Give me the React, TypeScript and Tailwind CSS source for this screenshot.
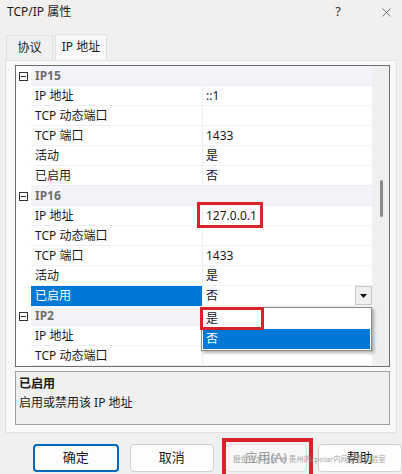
import React from 'react';
import { X } from 'lucide-react';

type Row = { name: string; value: string; selected?: boolean };
type Group = { name: string; rows: Row[] };

const groups: Group[] = [
  {
    name: 'IP15',
    rows: [
      { name: 'IP 地址', value: '::1' },
      { name: 'TCP 动态端口', value: '' },
      { name: 'TCP 端口', value: '1433' },
      { name: '活动', value: '是' },
      { name: '已启用', value: '否' },
    ],
  },
  {
    name: 'IP16',
    rows: [
      { name: 'IP 地址', value: '127.0.0.1' },
      { name: 'TCP 动态端口', value: '' },
      { name: 'TCP 端口', value: '1433' },
      { name: '活动', value: '是' },
      { name: '已启用', value: '否', selected: true },
    ],
  },
  {
    name: 'IP2',
    rows: [
      { name: 'IP 地址', value: '' },
      { name: 'TCP 动态端口', value: '' },
    ],
  },
];

const MinusBox = () => (
  <div className="w-[9px] h-[9px] border border-[#333] flex items-center justify-center bg-white">
    <div className="w-[5px] h-px bg-[#333]" />
  </div>
);

const CategoryRow = ({ name }: { name: string }) => (
  <div className="flex h-[20px]">
    <div className="w-[15px] flex items-center justify-center shrink-0">
      <MinusBox />
    </div>
    <div className="flex-1 bg-[#f3f4f9] border-b border-[#eceef4] flex items-center pl-[4px] font-bold text-[#6e6e6e]">
      {name}
    </div>
  </div>
);

const PropRow = ({ row }: { row: Row }) => (
  <div className="flex h-[20px]">
    <div className="w-[15px] shrink-0" />
    <div
      className={`w-[171px] shrink-0 flex items-center pl-[4px] border-b ${
        row.selected ? 'bg-[#0078d7] text-white border-[#0078d7]' : 'border-[#f0f0f0] text-[#1a1a1a]'
      }`}
    >
      {row.name}
    </div>
    <div className="w-px bg-[#ededed] shrink-0" />
    {row.selected ? (
      <div className="flex-1 flex items-stretch border-b border-[#f0f0f0]">
        <div className="flex-1 flex items-center pl-[3px] text-[#1a1a1a]">{row.value}</div>
        <div className="w-[17px] bg-[#f0f0f0] border border-[#c8c8c8] flex items-center justify-center">
          <svg width="7" height="4" viewBox="0 0 7 4">
            <path d="M0 0h7L3.5 4z" fill="#111" />
          </svg>
        </div>
      </div>
    ) : (
      <div className="flex-1 flex items-center pl-[3px] border-b border-[#f0f0f0] text-[#1a1a1a]">{row.value}</div>
    )}
  </div>
);

export default function App() {
  return (
    <div className="relative w-[402px] h-[474px] overflow-hidden bg-[#f0f0f0] text-[12px] font-['Segoe_UI','Noto_Sans','Noto_Sans_CJK_SC',sans-serif] text-[#1a1a1a]">
      {/* Title bar */}
      <div className="h-[24px] flex items-center bg-[#f2f0ee] pl-[7px]">
        <span className="text-[12px] text-[#1a1a1a]">TCP/IP 属性</span>
        <span className="ml-auto text-[13px] text-[#333] mr-[38px]">?</span>
        <X size={15} strokeWidth={1} className="text-[#333] mr-[8px]" />
      </div>

      {/* Tabs */}
      <div className="flex items-end h-[36px] pl-[6px] bg-[#f0f0f0]">
        <div className="w-[47px] h-[25px] flex items-center justify-center border border-b-0 border-[#e0e0e0] bg-[#f0f0f0] text-[12px]">
          协议
        </div>
        <div className="ml-[2px] w-[52px] h-[26px] flex items-center justify-center border border-b-0 border-[#e2e2e2] bg-[#f9f9f9] text-[12px] pb-[2px]">
          IP 地址
        </div>
      </div>

      {/* Tab panel */}
      <div className="mx-[5px] w-[392px] h-[373px] bg-[#f9f9f9] border border-[#e2e2e2] pl-[9px] pt-[4px] flex flex-col">
        {/* Property grid */}
        <div className="w-[375px] h-[302px] border border-[#6e6e6e] bg-white flex">
          <div className="w-[356px] flex flex-col">
            {groups.map((g) => (
              <React.Fragment key={g.name}>
                <CategoryRow name={g.name} />
                {g.rows.map((r, i) => (
                  <PropRow key={i} row={r} />
                ))}
              </React.Fragment>
            ))}
          </div>
          <div className="flex-1 bg-[#efefef] relative">
            <div className="absolute left-[8px] top-[114px] w-[3px] h-[37px] rounded-full bg-[#8a8a8a]" />
          </div>
        </div>

        {/* Description */}
        <div className="mt-[4px] w-[375px] h-[54px] border border-[#a0a0a0] bg-[#f0f0f0] px-[3px] pt-[3px]">
          <div className="font-bold leading-[18px]">已启用</div>
          <div className="leading-[18px] mt-[1px]">启用或禁用该 IP 地址</div>
        </div>
      </div>

      {/* Buttons */}
      <div className="flex gap-[11px] pl-[33px] mt-[11px]">
        <button className="w-[86px] h-[28px] rounded-[4px] border-2 border-[#0067c0] bg-[#fdfdfd] text-[13px]">确定</button>
        <button className="w-[85px] h-[28px] rounded-[4px] border border-[#d0d0d0] bg-[#fdfdfd] text-[13px]">取消</button>
        <button className="w-[82px] h-[28px] rounded-[4px] border border-[#e0e0e0] bg-[#f7f7f7] text-[13px] text-[#a0a0a0]">应用(A)</button>
        <button className="w-[85px] h-[28px] rounded-[4px] border border-[#d0d0d0] bg-[#fdfdfd] text-[13px]">帮助</button>
      </div>

      {/* Dropdown list */}
      <div className="absolute left-[201px] top-[307px] w-[171px] h-[44px] bg-white border border-[#8c8c8c] shadow-[2px_2px_3px_rgba(0,0,0,0.3)] p-[1px] flex flex-col">
        <div className="h-[20px] flex items-center pl-[3px]">是</div>
        <div className="h-[20px] flex items-center pl-[3px] bg-[#0078d7] text-white">否</div>
      </div>

      {/* Annotation boxes */}
      <div className="absolute left-[197px] top-[202px] w-[66px] h-[26px] border-[3px] border-[#d9232a]" />
      <div className="absolute left-[200px] top-[307px] w-[64px] h-[23px] border-[3px] border-[#d9232a]" />
      <div className="absolute left-[222px] top-[438px] w-[91px] h-[40px] border-[4px] border-[#d9232a]" />

      {/* Watermark */}
      <div className="absolute left-[233px] top-[454px] text-[7.5px] leading-[10px] text-[#8f8f8f] opacity-80 whitespace-nowrap">
        掘金技术社区 @ 贵州的cpolar内网穿透实验室
      </div>
    </div>
  );
}
